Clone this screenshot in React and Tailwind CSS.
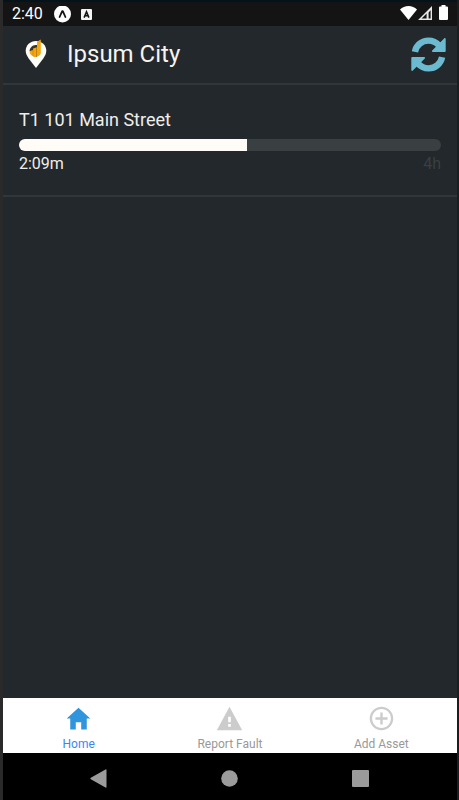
import React, { useState } from 'react';
import { IoMdHome, IoMdWarning, IoMdAddCircleOutline } from 'react-icons/io';

const assets = [
  { id: 1, name: 'T1 101 Main Street', elapsed: '2:09m', limit: '4h', progress: 54 },
];

const tabs = [
  { id: 'home', label: 'Home', icon: IoMdHome },
  { id: 'report', label: 'Report Fault', icon: IoMdWarning },
  { id: 'add', label: 'Add Asset', icon: IoMdAddCircleOutline },
];

const StatusBar = () => (
  <div className="h-[26px] flex items-center justify-between bg-[#141414] border-t-2 border-[#04131a] pl-[9px] pr-[9px] text-white">
    <div className="flex items-center">
      <span className="text-base leading-5">2:40</span>
      <svg className="ml-[11px] w-[17px] h-[17px]" viewBox="0 0 17 17">
        <circle cx="8.5" cy="8" r="8.500" fill="#fff" />
        <path d="M5.600 11L8.200 5.100h.6l2.600 5.900" fill="none" stroke="#141414" strokeWidth="1.800" strokeLinecap="round" strokeLinejoin="round" />
      </svg>
      <svg className="ml-[10px] w-[11px] h-[11px]" viewBox="0 0 11 11">
        <rect width="11" height="11" rx="1" fill="#f5f5f5" />
        <path d="M3.100 8.600L5.500 2.800l2.400 5.800M4 6.800h3" fill="none" stroke="#141414" strokeWidth="1.600" />
      </svg>
    </div>
    <div className="flex items-center pb-[3px]">
      <svg className="w-[17px] h-[14px]" viewBox="0 0 17 14">
        <path d="M8.500 14L0 3.400C2.300 1.400 5.200 0 8.500 0s6.200 1.400 8.500 3.400z" fill="#fff" />
      </svg>
      <svg className="ml-px w-[14px] h-[14px]" viewBox="0 0 14 14">
        <path d="M0 14L14 0v14zM3.600 12.500h5V7.400zM10.600 12.500h2V4.200l-2 2.200z" fill="#e8e8e8" fillRule="evenodd" />
      </svg>
      <svg className="ml-[7px] w-[9px] h-[15px]" viewBox="0 0 9 15">
        <path d="M2.500 0h4v1.500H8a1 1 0 011 1V14a1 1 0 01-1 1H1a1 1 0 01-1-1V2.500a1 1 0 011-1h1.500z" fill="#fff" />
      </svg>
    </div>
  </div>
);

const Logo = () => (
  <svg className="w-[22px] h-[30px]" viewBox="0 0 22 30">
    <path d="M11 2C5.200 2 .7 6.300.7 11.800c0 3 1.300 5.200 3 7.700L11 29l7.300-9.500c1.700-2.500 3-4.700 3-7.700C21.300 6.300 16.800 2 11 2z" fill="#fffdf8" />
    <path d="M4.600 11.600c.3-2.800 2.800-5.400 6-5.600h1.400v12l-4-1z" fill="#3a3428" />
    <path d="M4.500 12.300l3.400-1.300v6.200c-2-.8-3.400-2.600-3.400-4.900zM8.100 9.500l3.600-1.200v9.600c-1.200.3-2.500.1-3.600-.4zM12 2.800l3.800-2.300v14c-.7 1.500-2.100 2.700-3.800 3.200z" fill="#f5a60c" />
  </svg>
);

const RefreshIcon = () => (
  <svg className="w-[35px] h-[35px]" viewBox="0 0 35 35">
    <g id="half">
      <path d="M3.900 14.800C5.200 8.200 10.700 3.600 17.500 3.600c4.200 0 7.700 1.600 10.400 4.700" fill="none" stroke="currentColor" strokeWidth="6.400" />
      <path d="M34.700 2v12.100a.9.900 0 01-.9.900H21.800c-.9 0-1.200-.9-.6-1.500L33.100 1.400c.7-.6 1.600-.2 1.600.6z" fill="currentColor" />
    </g>
    <use href="#half" transform="rotate(180 17.500 17.500)" />
  </svg>
);

const Header = () => (
  <header className="h-[59px] flex items-center justify-between border-b-2 border-[#30373a] pl-[22px] pr-[11px]">
    <div className="flex items-center pb-[2px]">
      <Logo />
      <h1 className="ml-5 text-2xl leading-8 text-[#f5f3ee]">Ipsum City</h1>
    </div>
    <button type="button" aria-label="Refresh" className="text-[#6bbad0]">
      <RefreshIcon />
    </button>
  </header>
);

const AssetRow = ({ asset }) => (
  <li className="border-b-2 border-[#30373a] px-4 pt-[23px] pb-[19px]">
    <h2 className="text-lg leading-6 text-[#f0eeea]">{asset.name}</h2>
    <div className="mt-[7px] h-3 rounded-full overflow-hidden bg-[#3a3f41]">
      <div className="h-full bg-[#fffcf7]" style={{ width: `${asset.progress}%` }} />
    </div>
    <div className="mt-px flex justify-between text-base leading-6">
      <span className="text-[#f0eeea]">{asset.elapsed}</span>
      <span className="text-[#3a3f41]">{asset.limit}</span>
    </div>
  </li>
);

const TabBar = ({ active, onChange }) => (
  <nav className="h-[55px] flex bg-white">
    {tabs.map(({ id, label, icon: Icon }) => (
      <button
        key={id}
        type="button"
        onClick={() => onChange(id)}
        className="flex-1 flex flex-col items-center pt-[6px]"
      >
        <Icon className={`w-[29px] h-[29px] ${active === id ? 'text-[#2f95dc]' : 'text-[#cccccc]'}`} />
        <span className={`mt-[3px] text-xs leading-4 ${active === id ? 'text-[#3b86f7]' : 'text-[#999999]'}`}>
          {label}
        </span>
      </button>
    ))}
  </nav>
);

const SystemNav = () => (
  <div className="h-[47px] flex items-center justify-between bg-black text-[#9b9b9b] pl-[87px] pr-[88px] pt-1">
    <button type="button" aria-label="Back">
      <svg className="w-[17px] h-[19px]" viewBox="0 0 17 19" fill="currentColor">
        <path d="M16.500 1v17a.7.7 0 01-1 .6L.8 10.200a.8.8 0 010-1.400L15.500.4a.7.7 0 011 .6z" />
      </svg>
    </button>
    <button type="button" aria-label="Home screen">
      <svg className="w-[17px] h-[17px]" viewBox="0 0 17 17" fill="currentColor">
        <circle cx="8.500" cy="8.500" r="8.300" />
      </svg>
    </button>
    <button type="button" aria-label="Recent apps">
      <svg className="w-[17px] h-[17px]" viewBox="0 0 17 17" fill="currentColor">
        <rect width="17" height="17" rx="1" />
      </svg>
    </button>
  </div>
);

const App = () => {
  const [activeTab, setActiveTab] = useState('home');

  return (
    <div className="min-h-screen flex flex-col bg-[#23282c] border-l-3 border-r-2 border-l-[#2a2a2a] border-r-[#1b1d1e] font-[Roboto,sans-serif]">
      <StatusBar />
      <Header />
      <main className="flex-1">
        <ul>
          {assets.map((asset) => (
            <AssetRow key={asset.id} asset={asset} />
          ))}
        </ul>
      </main>
      <TabBar active={activeTab} onChange={setActiveTab} />
      <SystemNav />
    </div>
  );
};

export default App;
